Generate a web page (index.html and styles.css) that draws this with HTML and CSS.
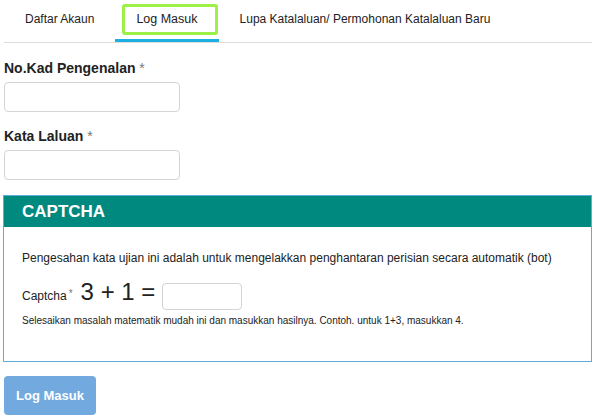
FILE: index.html
```html
<!DOCTYPE html>
<html lang="ms">
<head>
  <meta charset="UTF-8" />
  <title>Log Masuk</title>
  <meta name="viewport" content="width=device-width, initial-scale=1" />
  <link rel="stylesheet" href="styles.css">
</head>
<body>
  <ul class="tabs">
    <li><a href="#">Daftar Akaun</a></li>
    <li class="active"><a href="#">Log Masuk</a><span class="highlight"></span></li>
    <li><a href="#">Lupa Katalaluan/ Permohonan Katalaluan Baru</a></li>
  </ul>

  <form id="form">
    <div class="field">
      <label for="ic">No.Kad Pengenalan <span class="req">*</span></label>
      <input type="text" id="ic" />
    </div>
    <div class="field">
      <label for="pass">Kata Laluan <span class="req">*</span></label>
      <input type="password" id="pass" />
    </div>

    <div class="panel">
      <div class="panel-head">CAPTCHA</div>
      <div class="panel-body">
        <p class="intro">Pengesahan kata ujian ini adalah untuk mengelakkan penghantaran perisian secara automatik (bot)</p>
        <div class="captcha-row">
          <span class="captcha-label">Captcha</span><span class="req small">*</span>
          <span class="sum">3 + 1 =</span>
          <input type="text" id="answer" />
        </div>
        <p class="hint">Selesaikan masalah matematik mudah ini dan masukkan hasilnya. Contoh. untuk 1+3, masukkan 4.</p>
      </div>
    </div>

    <button type="submit" disabled>Log Masuk</button>
  </form>
</body>
</html>
```

FILE: styles.css
```css
body {
  margin: 0;
  padding: 0 3px 0 4px;
  font-family: "Liberation Sans", Arial, sans-serif;
  color: #222;
  background: #fff;
}
.tabs {
  list-style: none;
  margin: 0;
  padding: 0;
  display: flex;
  border-bottom: 1px solid #dcdcdc;
}
.tabs li {
  position: relative;
}
.tabs a {
  display: block;
  padding: 0 21px;
  height: 39px;
  line-height: 39px;
  border-bottom: 3px solid transparent;
  font-size: 12px;
  color: #222;
  text-decoration: none;
}
.tabs .active a {
  border-bottom-color: #1cb0e2;
  font-size: 12.5px;
}
.highlight {
  position: absolute;
  left: 7px;
  right: 1px;
  top: 4px;
  height: 25px;
  border: 3px solid #9cf048;
  border-radius: 3px;
}
form {
  padding-top: 15px;
}
.field {
  margin-bottom: 14px;
}
label {
  display: block;
  font-size: 14px;
  font-weight: 700;
  line-height: 20px;
  margin-bottom: 4px;
}
.req {
  color: #777;
  font-weight: 400;
}
.field input {
  width: 176px;
  height: 30px;
  box-sizing: border-box;
  border: 1px solid #d4d4d4;
  border-radius: 4px;
  padding: 4px 8px;
}
.panel {
  margin: 15px 0 14px -1px;
  border: 1px solid #5eaedb;
}
.panel-head {
  background: #00897f;
  color: #fff;
  font-size: 17px;
  font-weight: 700;
  height: 31px;
  line-height: 31px;
  padding-left: 18px;
}
.panel-body {
  padding: 24px 18px 34px;
}
.intro {
  margin: 0;
  font-size: 12px;
  line-height: 14px;
}
.captcha-row {
  display: flex;
  align-items: baseline;
  margin-top: 13px;
}
.captcha-label {
  font-size: 12px;
}
.req.small {
  font-size: 10px;
  margin: 0 8px 0 2px;
  position: relative;
  top: -3px;
}
.sum {
  font-size: 24px;
  line-height: 28px;
  margin-right: 7px;
}
.captcha-row input {
  width: 80px;
  height: 27px;
  box-sizing: border-box;
  border: 1px solid #d4d4d4;
  border-radius: 4px;
  font-size: 12px;
  padding: 4px 6px;
}
.hint {
  margin: 5px 0 0;
  font-size: 10px;
  line-height: 12px;
}
button {
  width: 92px;
  height: 39px;
  background: #72aae0;
  color: #fff;
  font-family: "Liberation Sans", Arial, sans-serif;
  font-weight: 700;
  font-size: 13px;
  border: none;
  border-radius: 4px;
}
```
